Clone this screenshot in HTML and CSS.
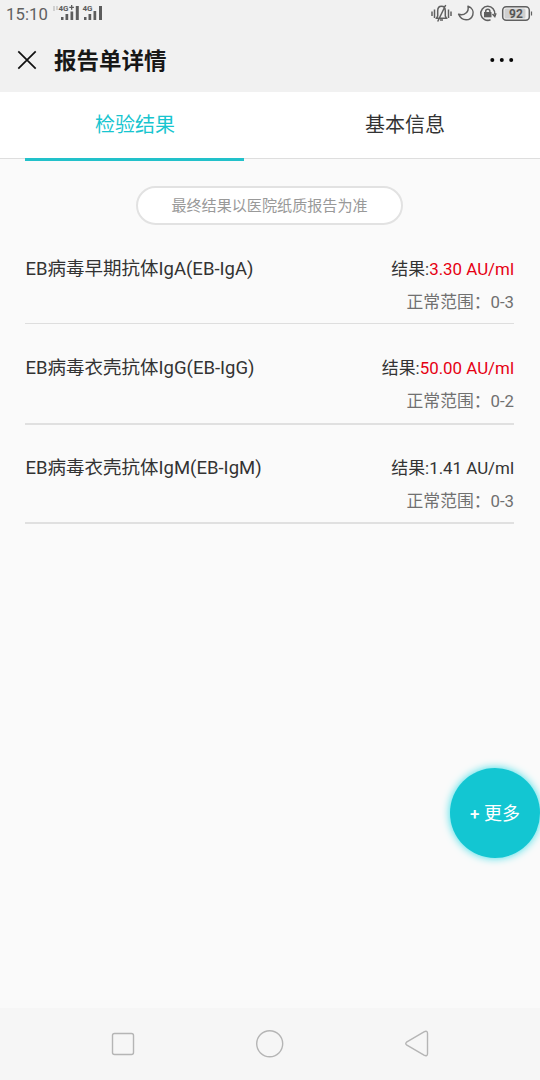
FILE: index.html
```html
<!DOCTYPE html>
<html lang="zh-CN">
<head>
<meta charset="utf-8">
<title>报告单详情</title>
<link rel="stylesheet" href="styles.css">
</head>
<body>
<div class="screen">
  <div class="status">
    <span class="clock">15:10</span>
    <svg class="signals" width="56" height="28" viewBox="0 0 56 28">
      <g fill="#d0d0d0"><rect x="2" y="6" width="2" height="5"/><rect x="5" y="6" width="2" height="4"/></g>
      <g fill="#5c5c5c">
        <text class="net" x="7.500" y="11.200">4G</text><path d="M18.300 6.700h4.600v1.300h-4.600zM20 5h1.300v4.800h-1.300z"/>
        <rect x="10" y="17" width="2.500" height="3"/><rect x="14.500" y="14" width="2.700" height="6"/><rect x="19.500" y="11.500" width="2.700" height="8.500"/><rect x="24.800" y="6" width="3" height="14"/>
        <text class="net" x="31.500" y="11.200">4G</text>
        <rect x="33" y="17" width="2.500" height="3"/><rect x="37.500" y="14" width="2.700" height="6"/><rect x="42.500" y="11" width="2.700" height="9"/><rect x="48" y="6" width="3" height="14"/>
      </g>
    </svg>
    <svg class="indicators" width="110" height="28" viewBox="430 0 110 28" fill="none" stroke="#606060" stroke-width="1.500">
      <path d="M432 11.500v4.500M434.500 9.500v8.500M448.500 9.500v8.500M451 11.500v4.500"/>
      <path d="M436.500 18.200h10l-1.200-2.200v-5c0-3-1.400-4.700-3.800-4.700s-3.800 1.700-3.800 4.700v5zM440 20h3M445.700 5l-8 16.500"/>
      <path d="M468 6.300c4 1.500 6 5 4.800 8.600-2.300 6.500-11 6.800-14.200-.6 6 1.800 10.600-2.500 9.400-8z" stroke-linejoin="round"/>
      <path d="M490.500 19.800A7 7 0 1 1 494.700 14.500M492.500 14l2.300 2.500 1.200-3.200"/>
      <rect x="484" y="12" width="7.500" height="5.300" fill="#606060" stroke="none"/><path d="M485.700 12.500v-1.200a2.100 2.100 0 0 1 4.200 0v1.200"/>
      <rect x="502.700" y="6.700" width="26.600" height="13.600" rx="3.500"/>
      <rect x="504.500" y="8.500" width="21" height="10" rx="1.500" fill="#cfcfcf" stroke="none"/>
      <path d="M531.500 11.500v4" stroke-width="1.200"/>
      <text class="charge" x="516" y="18" text-anchor="middle">92</text>
    </svg>
  </div>
  <header class="header">
    <svg width="20" height="20" viewBox="0 0 20 20"><path d="M1.300 1.300l17.400 17.400M18.700 1.300L1.300 18.700" stroke="#111" stroke-width="1.700"/></svg>
    <h1 class="title">报告单详情</h1>
    <svg class="menu" width="24" height="6" viewBox="0 0 24 6" fill="#080808"><circle cx="2.300" cy="3" r="2"/><circle cx="11.800" cy="3" r="2"/><circle cx="21.200" cy="3" r="2"/></svg>
  </header>
  <nav class="tabs">
    <div class="tab active">检验结果</div>
    <div class="tab">基本信息</div>
  </nav>
  <main class="content">
    <div class="notice">最终结果以医院纸质报告为准</div>
    <section class="item">
      <div class="name">EB病毒早期抗体IgA(EB-IgA)</div>
      <div class="values"><div class="result">结果:<span class="high">3.30 AU/ml</span></div><div class="range">正常范围：0-3</div></div>
    </section>
    <section class="item second">
      <div class="name">EB病毒衣壳抗体IgG(EB-IgG)</div>
      <div class="values"><div class="result">结果:<span class="high">50.00 AU/ml</span></div><div class="range">正常范围：0-2</div></div>
    </section>
    <section class="item third">
      <div class="name">EB病毒衣壳抗体IgM(EB-IgM)</div>
      <div class="values"><div class="result">结果:1.41 AU/ml</div><div class="range">正常范围：0-3</div></div>
    </section>
  </main>
  <div class="navbar">
    <svg width="540" height="72" viewBox="0 0 540 72" fill="none" stroke="#b5b5b5" stroke-width="1.400" stroke-linejoin="round">
      <rect x="112.500" y="25.500" width="21" height="21" rx="2"/>
      <circle cx="269.700" cy="35.700" r="13"/>
      <path d="M406.500 34.200q-1.500 1.300 0 2.600l17.500 10.400q3.500 1.500 3.500-1.500v-20.400q0-3-3.500-1.500z"/>
    </svg>
  </div>
  <button class="more"><span class="plus">+</span> 更多</button>
</div>
</body>
</html>
```
FILE: styles.css
```css
* { box-sizing: border-box; }
body { margin: 0; font-family: Roboto, "Noto Sans CJK SC", sans-serif; }
.screen { width: 540px; height: 1080px; display: flex; flex-direction: column; position: relative; overflow: hidden; background: #fafafa; color: #333; }
.status { height: 28px; flex: none; display: flex; background: #f1f1f1; padding-left: 6px; }
.clock { width: 45px; font-size: 16.700px; line-height: 29px; color: #606060; letter-spacing: .1px; }
.net { font: bold 8px Roboto, sans-serif; }
.indicators { margin-left: auto; }
.charge { font: bold 12px Roboto, sans-serif; fill: #555; stroke: none; }
.header { height: 64px; flex: none; display: flex; align-items: center; padding: 0 26px 0 17px; background: #f1f1f1; }
.title { margin: 2px 0 0 17px; font-size: 22.500px; line-height: 32px; font-weight: 700; color: #171717; }
.menu { margin-left: auto; }
.tabs { height: 67px; flex: none; display: flex; background: #fff; border-bottom: 1px solid #dedede; }
.tab { width: 270px; font-size: 20px; line-height: 66px; text-align: center; }
.active { height: 69px; color: #18c5cf; }
.active::after { content: ""; display: block; width: 219px; height: 3px; margin-left: 25px; background: #22c1ca; }
.content { flex: 1; padding: 27px 26px 0 25px; }
.notice { width: 267px; height: 39px; margin-left: 111px; border: 2px solid #e2e2e2; border-radius: 20px; background: #fff; color: #999; font-size: 15.100px; line-height: 36px; text-align: center; }
.item { height: 99px; display: flex; justify-content: space-between; padding-top: 28px; border-bottom: 1px solid #dedede; }
.second { height: 101px; border-bottom: 2px solid #e0e0e0; }
.third { height: 99px; padding-top: 27px; border-bottom: 2px solid #e0e0e0; }
.name { font-size: 18.500px; line-height: 32px; padding-left: .5px; }
.values { font-size: 16.900px; line-height: 33px; text-align: right; }
.high { color: #e60012; }
.range { color: #707070; font-size: 16.800px; }
.navbar { height: 72px; flex: none; background: #f6f6f6; }
.more { position: absolute; left: 450px; top: 768px; width: 90px; height: 90px; padding: 2px 0 0; border: 0; border-radius: 50%; background: #13c6d2; box-shadow: 0 0 8px #35dce6; color: #fff; font: 18px/88px Roboto, "Noto Sans CJK SC", sans-serif; }
.plus { font-size: 17px; font-weight: 500; }
```
